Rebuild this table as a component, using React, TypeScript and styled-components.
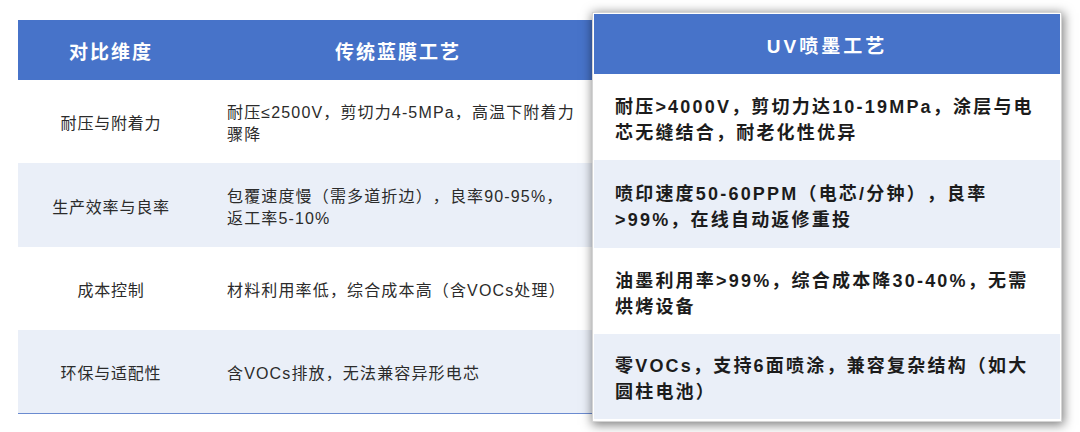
import React from "react";
import styled, { createGlobalStyle } from "styled-components";

const GlobalStyle = createGlobalStyle`
  html, body { margin: 0; padding: 0; background: #ffffff; }
  body {
    font-family: "Liberation Sans", "Noto Sans CJK SC", sans-serif;
    -webkit-font-smoothing: antialiased;
    text-spacing-trim: space-all;
  }
`;

const BLUE = "#4773c9";
const SHADE = "#eaeff8";

const Stage = styled.div`
  position: relative;
  width: 1080px;
  height: 432px;
  box-sizing: border-box;
  padding: 20px 0 0 18px;
  overflow: hidden;
`;

const Table = styled.div`
  display: grid;
  grid-template-columns: 186px 440px;
  grid-template-rows: 60px 83px 84px 83px 83px;
  width: 626px;
  border-bottom: 1px solid #6b8bd0;
`;

const HeadCell = styled.div`
  background: ${BLUE};
  color: #ffffff;
  font-weight: 700;
  font-size: 19px;
  letter-spacing: 2px;
  display: flex;
  align-items: center;
  justify-content: center;
`;

const HeadCellOffset = styled(HeadCell)`
  justify-content: flex-start;
  padding-left: 131px;
`;

const BodyCell = styled.div<{ $shade?: boolean; $center?: boolean }>`
  background: ${(p) => (p.$shade ? SHADE : "#ffffff")};
  color: #2b2b2b;
  font-size: 16px;
  letter-spacing: ${(p) => (p.$center ? "0.8px" : "1.15px")};
  line-height: 22px;
  white-space: pre-line;
  display: flex;
  align-items: center;
  justify-content: ${(p) => (p.$center ? "center" : "flex-start")};
  text-align: ${(p) => (p.$center ? "center" : "left")};
  padding: ${(p) => (p.$center ? "5px 0 0 0" : "5px 0 0 23px")};
  box-sizing: border-box;
`;

const Card = styled.div`
  position: absolute;
  left: 592px;
  top: 12px;
  width: 470px;
  box-sizing: border-box;
  border: 1px solid #d4d4d4;
  background: #ffffff;
  padding: 1px 1px 2px 1px;
  display: flex;
  flex-direction: column;
  box-shadow: 1px 2px 10px 1px rgba(0, 0, 0, 0.5);
`;

const CardHead = styled.div`
  height: 60px;
  background: ${BLUE};
  color: #ffffff;
  font-weight: 700;
  font-size: 19px;
  letter-spacing: 3px;
  display: flex;
  align-items: center;
  justify-content: center;
`;

const CardRow = styled.div<{ $shade?: boolean; $h: number }>`
  height: ${(p) => p.$h}px;
  background: ${(p) => (p.$shade ? SHADE : "#ffffff")};
  color: #1c1c1c;
  font-weight: 700;
  font-size: 18px;
  letter-spacing: 2.2px;
  line-height: 26px;
  white-space: pre-line;
  display: flex;
  align-items: center;
  padding: 5px 0 0 21px;
  box-sizing: border-box;
`;

const rows = [
  {
    dim: "耐压与附着力",
    old: "耐压≤2500V，剪切力4-5MPa，高温下附着力\n骤降",
    uv: "耐压>4000V，剪切力达10-19MPa，涂层与电\n芯无缝结合，耐老化性优异",
    h: 86,
  },
  {
    dim: "生产效率与良率",
    old: "包覆速度慢（需多道折边），良率90-95%，\n返工率5-10%",
    uv: "喷印速度50-60PPM（电芯/分钟），良率\n>99%，在线自动返修重投",
    h: 88,
  },
  {
    dim: "成本控制",
    old: "材料利用率低，综合成本高（含VOCs处理）",
    uv: "油墨利用率>99%，综合成本降30-40%，无需\n烘烤设备",
    h: 86,
  },
  {
    dim: "环保与适配性",
    old: "含VOCs排放，无法兼容异形电芯",
    uv: "零VOCs，支持6面喷涂，兼容复杂结构（如大\n圆柱电池）",
    h: 85,
  },
];

export default function App() {
  return (
    <>
      <GlobalStyle />
      <Stage>
        <Table>
          <HeadCell>对比维度</HeadCell>
          <HeadCellOffset>传统蓝膜工艺</HeadCellOffset>
          {rows.map((r, i) => (
            <React.Fragment key={r.dim}>
              <BodyCell $shade={i % 2 === 1} $center>
                {r.dim}
              </BodyCell>
              <BodyCell $shade={i % 2 === 1}>{r.old}</BodyCell>
            </React.Fragment>
          ))}
        </Table>
        <Card>
          <CardHead>UV喷墨工艺</CardHead>
          {rows.map((r, i) => (
            <CardRow key={r.dim} $shade={i % 2 === 1} $h={r.h}>
              {r.uv}
            </CardRow>
          ))}
        </Card>
      </Stage>
    </>
  );
}
